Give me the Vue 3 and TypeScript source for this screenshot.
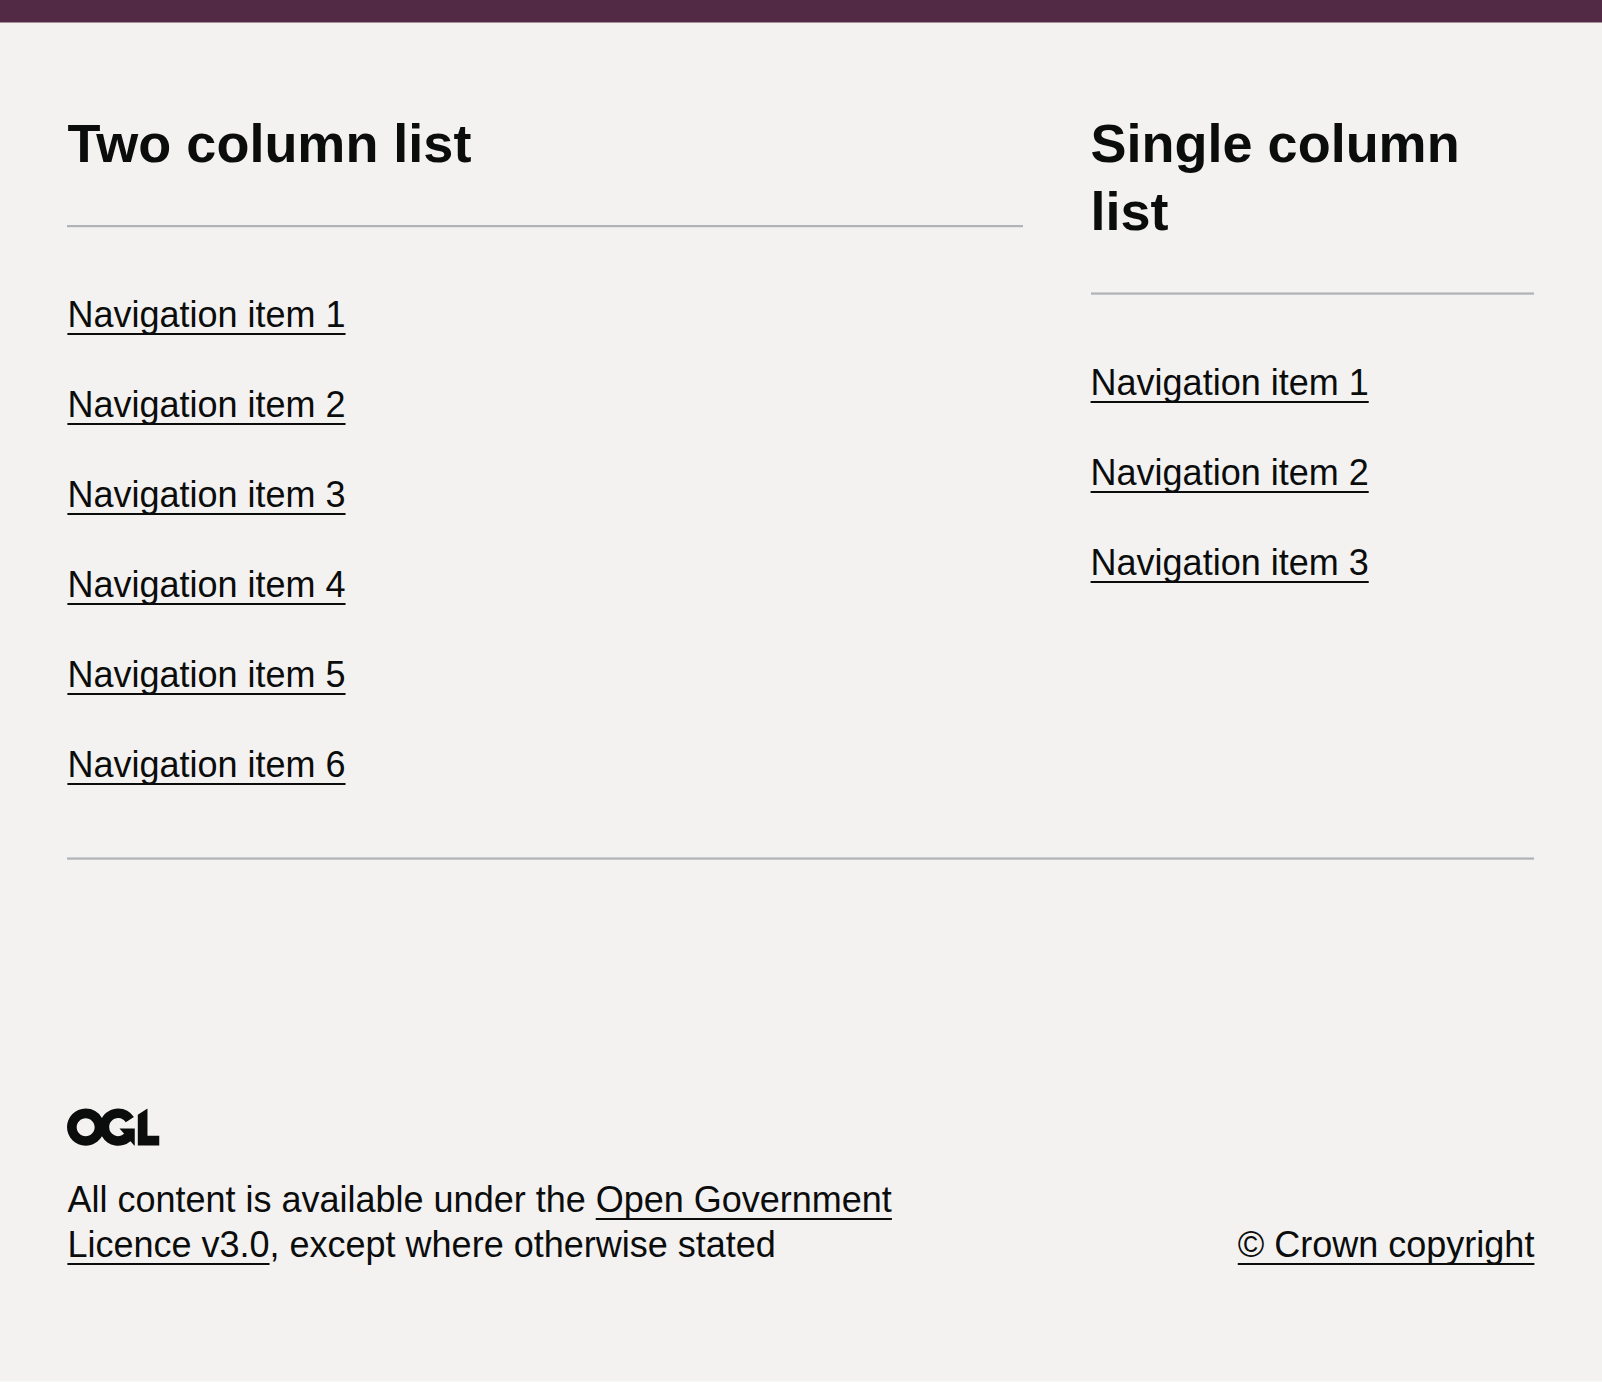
<script setup lang="ts">
interface NavSection {
  title: string
  wide: boolean
  items: string[]
}

const makeItems = (count: number): string[] =>
  Array.from({ length: count }, (_, i) => `Navigation item ${i + 1}`)

const sections: NavSection[] = [
  { title: 'Two column list', wide: true, items: makeItems(6) },
  { title: 'Single column list', wide: false, items: makeItems(3) },
]
</script>

<template>
  <footer class="footer">
    <div class="navigation">
      <section
        v-for="section in sections"
        :key="section.title"
        class="section"
        :class="{ 'section-wide': section.wide }"
      >
        <h2 class="heading">{{ section.title }}</h2>
        <ul class="list">
          <li v-for="item in section.items" :key="item" class="list-item">
            <a class="link" href="#">{{ item }}</a>
          </li>
        </ul>
      </section>
    </div>
    <hr class="break" />
    <div class="meta">
      <div class="meta-main">
        <svg class="logo" viewBox="0 0 483.2 195.7" aria-hidden="true" focusable="false">
          <path
            fill="currentColor"
            d="M421.5 142.8V.1l-50.7 32.3v161.1h112.4v-50.7zm-122.3-9.6A47.12 47.12 0 0 1 221 97.8c0-26 21.1-47.1 47.1-47.1 16.7 0 31.4 8.7 39.7 21.8l42.7-27.2A97.63 97.63 0 0 0 268.1 0c-36.5 0-68.3 20.1-85.1 49.7A98 98 0 0 0 97.8 0C43.9 0 0 43.9 0 97.8s43.9 97.8 97.8 97.8c36.5 0 68.3-20.1 85.1-49.7a97.76 97.76 0 0 0 149.6 25.4l19.4 22.2h3v-87.8h-80l24.3 27.5zM97.8 145c-26 0-47.1-21.1-47.1-47.1s21.1-47.1 47.1-47.1 47.1 21.1 47.1 47.1S123.8 145 97.8 145"
          />
        </svg>
        <p class="licence">
          All content is available under the
          <a class="link" href="#">Open Government Licence v3.0</a>, except where otherwise stated
        </p>
      </div>
      <a class="link copyright" href="#">© Crown copyright</a>
    </div>
  </footer>
</template>

<style>
body {
  margin: 0;
  background: #fff;
}
</style>

<style scoped>
.footer {
  box-sizing: border-box;
  height: 1382px;
  padding: 88px 67.6px 0 67.4px;
  border-top: 22px solid #532a45;
  border-bottom: 1px solid #f9f9f8;
  box-shadow: inset 0 1px #a38f9b;
  background: #f3f2f1;
  color: #0b0c0c;
  font: 36px/45px "Liberation Sans", Arial, sans-serif;
}

.navigation {
  display: grid;
  grid-template-columns: 956px 443.7px;
  column-gap: 67.2px;
}

.heading {
  margin: 0;
  padding-bottom: 50px;
  background: linear-gradient(#cccecf 0 1px, #b1b4b6 1px 2px, #c4c6c7 2px) bottom / 100% 3px no-repeat;
  font-size: 54px;
  line-height: 67.5px;
}

.section-wide .heading {
  background-image: linear-gradient(#b1b4b6 0 2px, #e3e3e3 2px);
}

.list {
  margin: 0;
  padding: 65px 0 0;
  list-style: none;
}

.section-wide .list {
  padding-top: 64px;
}

.list-item {
  margin-bottom: 45px;
}

.link {
  color: inherit;
  text-decoration: underline;
  text-decoration-thickness: 2.25px;
  text-underline-offset: 6px;
  text-decoration-skip-ink: none;
}

.break {
  height: 3px;
  margin: 25px 0 248px;
  border: 0;
  background: linear-gradient(#cccecf 0 1px, #b1b4b6 1px 2px, #c4c6c7 2px);
}

.meta {
  display: flex;
  align-items: flex-end;
  justify-content: space-between;
}

.meta-main {
  width: 880px;
}

.logo {
  display: block;
  width: 92.25px;
  height: 38.25px;
}

.licence {
  margin: 31px 0 0;
}
</style>
